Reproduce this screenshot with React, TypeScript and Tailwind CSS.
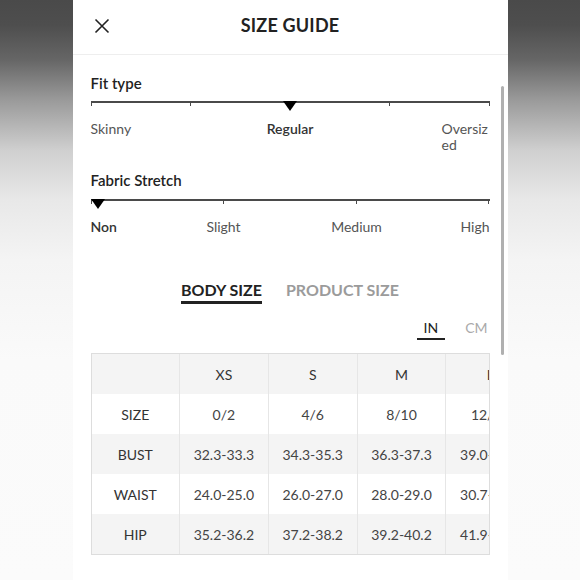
import React from "react";

const sizes = [
  { name: "XS", size: "0/2", bust: "32.3-33.3", waist: "24.0-25.0", hip: "35.2-36.2" },
  { name: "S", size: "4/6", bust: "34.3-35.3", waist: "26.0-27.0", hip: "37.2-38.2" },
  { name: "M", size: "8/10", bust: "36.3-37.3", waist: "28.0-29.0", hip: "39.2-40.2" },
  { name: "L", size: "12/14", bust: "39.0-41.0", waist: "30.7-32.7", hip: "41.9-43.9" },
];

const rows: { label: string; key: "size" | "bust" | "waist" | "hip" }[] = [
  { label: "SIZE", key: "size" },
  { label: "BUST", key: "bust" },
  { label: "WAIST", key: "waist" },
  { label: "HIP", key: "hip" },
];

const Marker: React.FC<{ className?: string }> = ({ className = "" }) => (
  <div
    className={`absolute top-0 h-0 w-0 border-l-[7px] border-r-[7px] border-t-[10px] border-l-transparent border-r-transparent border-t-black ${className}`}
  />
);

const Track: React.FC<{ ticks: number; markerClass: string }> = ({ ticks, markerClass }) => (
  <div className="relative h-[10px]">
    <div className="absolute left-0 right-0 top-0 h-[1.5px] bg-[#4a4a4a]" />
    <div className="flex justify-between">
      {Array.from({ length: ticks }).map((_, i) => (
        <div key={i} className="h-[5px] w-px bg-[#4a4a4a]" />
      ))}
    </div>
    <Marker className={markerClass} />
  </div>
);

export default function App() {
  return (
    <div
      className="flex h-[580px] w-[580px] justify-center overflow-hidden bg-[linear-gradient(to_bottom,#4a4a4a_0px,#4e4e4e_25px,#666666_60px,#9a9a9a_100px,#cfcfcf_150px,#e8e8e8_200px,#f4f4f4_260px,#fafafa_360px,#fbfbfb_580px)]"
      style={{ fontFamily: "Lato, 'Open Sans', sans-serif" }}
    >
      <div className="relative h-[580px] w-[435px] shrink-0 bg-white">
        {/* header */}
        <div className="relative flex h-[55px] items-center border-b border-[#eeeeee] pl-[21px]">
          <svg width="16" height="16" viewBox="0 0 16 16" className="-mt-[3px]">
            <path d="M1.5 1.5 L14.5 14.5 M14.5 1.5 L1.5 14.5" stroke="#222" strokeWidth="1.6" fill="none" />
          </svg>
          <div className="absolute inset-x-0 top-[14px] text-center text-[18px] font-bold leading-[22px] tracking-[0.2px] text-[#222]">
            SIZE GUIDE
          </div>
        </div>

        {/* scrollbar */}
        <div className="absolute left-[428px] top-[86px] h-[269px] w-[3px] rounded-full bg-[#b0b0b0]" />

        <div className="px-[18px]">
          {/* fit type */}
          <div className="mt-[18px] text-[15px] font-semibold leading-[20px] text-[#222]">Fit type</div>
          <div className="mt-[8px]">
            <Track ticks={5} markerClass="left-1/2 -translate-x-1/2" />
          </div>
          <div className="mt-[10px] grid grid-cols-3 text-[14px] leading-[16px] text-[#555]">
            <div>Skinny</div>
            <div className="text-center font-semibold text-[#333]">Regular</div>
            <div className="flex justify-end">
              <div className="w-[48px] break-all">Oversized</div>
            </div>
          </div>

          {/* fabric stretch */}
          <div className="mt-[17px] text-[15px] font-semibold leading-[20px] text-[#222]">Fabric Stretch</div>
          <div className="mt-[9px]">
            <Track ticks={4} markerClass="left-0" />
          </div>
          <div className="mt-[10px] grid grid-cols-[66.5px_133px_133px_66.5px] text-[14px] leading-[16px] text-[#555]">
            <div className="font-semibold text-[#333]">Non</div>
            <div className="text-center">Slight</div>
            <div className="text-center">Medium</div>
            <div className="text-right">High</div>
          </div>

          {/* tabs */}
          <div className="mt-[45px] flex justify-center gap-[24px] text-[16px] font-bold leading-[20px]">
            <div className="border-b-[3px] border-[#222] pb-px text-[#222]">BODY SIZE</div>
            <div className="text-[#9b9b9b]">PRODUCT SIZE</div>
          </div>

          {/* units */}
          <div className="mt-[16px] flex justify-end text-[14px] leading-[16px]">
            <div className="border-b-2 border-[#222] px-[7px] pb-[2px] text-[#222]">IN</div>
            <div className="ml-[20px] mr-[2px] text-[#aaaaaa]">CM</div>
          </div>

          {/* table */}
          <div className="mt-[13px] w-[399px] overflow-hidden border border-[#dddddd]">
            <table className="w-[443px] table-fixed border-collapse text-center text-[14px] text-[#444]">
              <colgroup>
                <col className="w-[88px]" />
                {sizes.map((s) => (
                  <col key={s.name} className="w-[88.8px]" />
                ))}
              </colgroup>
              <tbody>
                <tr className="h-[40px] bg-[#f4f4f4]">
                  <td className="border-r border-[#e6e6e6]" />
                  {sizes.map((s) => (
                    <td key={s.name} className="border-r border-[#e6e6e6] text-[#333]">
                      {s.name}
                    </td>
                  ))}
                </tr>
                {rows.map((r, i) => (
                  <tr key={r.key} className={`h-[40px] ${i % 2 === 0 ? "bg-white" : "bg-[#f4f4f4]"}`}>
                    <td className="border-r border-[#e6e6e6] text-[#333]">{r.label}</td>
                    {sizes.map((s) => (
                      <td key={s.name} className="whitespace-nowrap border-r border-[#e6e6e6]">
                        {s[r.key]}
                      </td>
                    ))}
                  </tr>
                ))}
              </tbody>
            </table>
          </div>
        </div>
      </div>
    </div>
  );
}
